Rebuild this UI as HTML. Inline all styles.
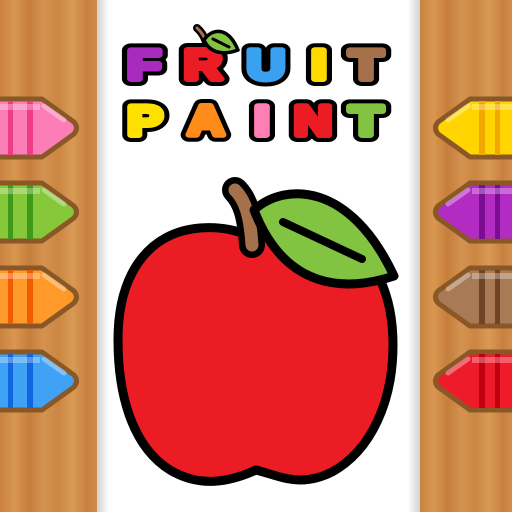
<!DOCTYPE html>
<html><head><style>
html,body{margin:0;padding:0;width:512px;height:512px;overflow:hidden;background:#fff}
</style></head><body>
<svg width="512" height="512" viewBox="0 0 512 512" xmlns="http://www.w3.org/2000/svg">
<defs>
<linearGradient id="wood" x1="0" x2="1" y1="0" y2="0">
<stop offset="0" stop-color="#c98240"/><stop offset="0.15" stop-color="#d8974f"/><stop offset="0.3" stop-color="#c67e3c"/><stop offset="0.45" stop-color="#d49250"/><stop offset="0.6" stop-color="#cb8642"/><stop offset="0.75" stop-color="#d99a55"/><stop offset="0.9" stop-color="#c88040"/><stop offset="1" stop-color="#d08c4a"/>
</linearGradient>
<linearGradient id="shL" x1="0" x2="1"><stop offset="0" stop-color="#000" stop-opacity="0.18"/><stop offset="1" stop-color="#000" stop-opacity="0"/></linearGradient>
<linearGradient id="shR" x1="1" x2="0"><stop offset="0" stop-color="#000" stop-opacity="0.18"/><stop offset="1" stop-color="#000" stop-opacity="0"/></linearGradient>
<style>
.o{font-family:"Liberation Sans",sans-serif;font-weight:bold;font-size:42px;text-anchor:middle;stroke:#000;stroke-width:14px;stroke-linejoin:round;fill:#000}
.c{font-family:"Liberation Sans",sans-serif;font-weight:bold;font-size:42px;text-anchor:middle;stroke-width:6px;stroke-linejoin:round}
</style>
</defs>
<rect x="0" y="0" width="97" height="512" fill="url(#wood)"/>
<rect x="420" y="0" width="92" height="512" fill="url(#wood)"/>
<rect x="97" y="0" width="12" height="512" fill="url(#shL)"/>
<rect x="408" y="0" width="12" height="512" fill="url(#shR)"/>

<g transform="translate(0,128)"><path d="M-10,-29 L42,-29 L74,-6 Q79,0 74,6 L42,29 L-10,29 Z" fill="#fb7fb6" stroke="#8a5726" stroke-width="5" stroke-linejoin="round"/><rect x="8" y="-27" width="5" height="54" fill="#ee3d84"/><rect x="27" y="-27" width="6" height="54" fill="#ee3d84"/><rect x="-5" y="-24" width="45" height="6" fill="#fff" opacity="0.3"/><path d="M44,-22 L64,-8" stroke="#fff" stroke-opacity="0.35" stroke-width="5" stroke-linecap="round"/></g>
<g transform="translate(0,212)"><path d="M-10,-29 L42,-29 L74,-6 Q79,0 74,6 L42,29 L-10,29 Z" fill="#86c83a" stroke="#8a5726" stroke-width="5" stroke-linejoin="round"/><rect x="8" y="-27" width="5" height="54" fill="#3f9a1a"/><rect x="27" y="-27" width="6" height="54" fill="#3f9a1a"/><rect x="-5" y="-24" width="45" height="6" fill="#fff" opacity="0.3"/><path d="M44,-22 L64,-8" stroke="#fff" stroke-opacity="0.35" stroke-width="5" stroke-linecap="round"/></g>
<g transform="translate(0,297)"><path d="M-10,-29 L42,-29 L74,-6 Q79,0 74,6 L42,29 L-10,29 Z" fill="#ff9a2a" stroke="#8a5726" stroke-width="5" stroke-linejoin="round"/><rect x="8" y="-27" width="5" height="54" fill="#f25a00"/><rect x="27" y="-27" width="6" height="54" fill="#f25a00"/><rect x="-5" y="-24" width="45" height="6" fill="#fff" opacity="0.3"/><path d="M44,-22 L64,-8" stroke="#fff" stroke-opacity="0.35" stroke-width="5" stroke-linecap="round"/></g>
<g transform="translate(0,381)"><path d="M-10,-29 L42,-29 L74,-6 Q79,0 74,6 L42,29 L-10,29 Z" fill="#3fa2f4" stroke="#8a5726" stroke-width="5" stroke-linejoin="round"/><rect x="8" y="-27" width="5" height="54" fill="#1265e0"/><rect x="27" y="-27" width="6" height="54" fill="#1265e0"/><rect x="-5" y="-24" width="45" height="6" fill="#fff" opacity="0.3"/><path d="M44,-22 L64,-8" stroke="#fff" stroke-opacity="0.35" stroke-width="5" stroke-linecap="round"/></g>

<g transform="translate(512,128) scale(-1,1)"><path d="M-10,-29 L42,-29 L74,-6 Q79,0 74,6 L42,29 L-10,29 Z" fill="#ffd400" stroke="#8a5726" stroke-width="5" stroke-linejoin="round"/><rect x="12" y="-27" width="5" height="54" fill="#f2a800"/><rect x="27" y="-27" width="6" height="54" fill="#f2a800"/><rect x="-5" y="-24" width="45" height="6" fill="#fff" opacity="0.3"/><path d="M44,-22 L64,-8" stroke="#fff" stroke-opacity="0.35" stroke-width="5" stroke-linecap="round"/></g>
<g transform="translate(512,212) scale(-1,1)"><path d="M-10,-29 L42,-29 L74,-6 Q79,0 74,6 L42,29 L-10,29 Z" fill="#b22cc4" stroke="#8a5726" stroke-width="5" stroke-linejoin="round"/><rect x="12" y="-27" width="5" height="54" fill="#7a0d92"/><rect x="27" y="-27" width="6" height="54" fill="#7a0d92"/><rect x="-5" y="-24" width="45" height="6" fill="#fff" opacity="0.3"/><path d="M44,-22 L64,-8" stroke="#fff" stroke-opacity="0.35" stroke-width="5" stroke-linecap="round"/></g>
<g transform="translate(512,297) scale(-1,1)"><path d="M-10,-29 L42,-29 L74,-6 Q79,0 74,6 L42,29 L-10,29 Z" fill="#a87a56" stroke="#8a5726" stroke-width="5" stroke-linejoin="round"/><rect x="12" y="-27" width="5" height="54" fill="#6e4424"/><rect x="27" y="-27" width="6" height="54" fill="#6e4424"/><rect x="-5" y="-24" width="45" height="6" fill="#fff" opacity="0.3"/><path d="M44,-22 L64,-8" stroke="#fff" stroke-opacity="0.35" stroke-width="5" stroke-linecap="round"/></g>
<g transform="translate(512,381) scale(-1,1)"><path d="M-10,-29 L42,-29 L74,-6 Q79,0 74,6 L42,29 L-10,29 Z" fill="#ee1c2b" stroke="#8a5726" stroke-width="5" stroke-linejoin="round"/><rect x="12" y="-27" width="5" height="54" fill="#c00010"/><rect x="27" y="-27" width="6" height="54" fill="#c00010"/><rect x="-5" y="-24" width="45" height="6" fill="#fff" opacity="0.3"/><path d="M44,-22 L64,-8" stroke="#fff" stroke-opacity="0.35" stroke-width="5" stroke-linecap="round"/></g>

<!-- title -->
<g transform="translate(144,79) scale(1.3,1)"><text class="o">F</text><text class="c" fill="#a82bbd" stroke="#a82bbd">F</text></g>
<g transform="translate(203,79) scale(1.25,1)"><text class="o">R</text><text class="c" fill="#ec1c24" stroke="#ec1c24">R</text></g>
<g transform="translate(266,79) scale(1.25,1)"><text class="o">U</text><text class="c" fill="#3aa0f0" stroke="#3aa0f0">U</text></g>
<g transform="translate(319,79) scale(1.3,1)"><text class="o">I</text><text class="c" fill="#ffd900" stroke="#ffd900">I</text></g>
<g transform="translate(366,79) scale(1.3,1)"><text class="o">T</text><text class="c" fill="#a4714b" stroke="#a4714b">T</text></g>
<g transform="translate(145,135) scale(1.25,1)"><text class="o">P</text><text class="c" fill="#ffe100" stroke="#ffe100">P</text></g>
<g transform="translate(206,135) scale(1.2,1)"><text class="o">A</text><text class="c" fill="#ff8c1a" stroke="#ff8c1a">A</text></g>
<g transform="translate(262,135) scale(1.3,1)"><text class="o">I</text><text class="c" fill="#ff7eb5" stroke="#ff7eb5">I</text></g>
<g transform="translate(313,135) scale(1.25,1)"><text class="o">N</text><text class="c" fill="#ec1c24" stroke="#ec1c24">N</text></g>
<g transform="translate(366,135) scale(1.3,1)"><text class="o">T</text><text class="c" fill="#82c341" stroke="#82c341">T</text></g>

<path d="M197,28 Q203,33 206,42" stroke="#000" stroke-width="8" fill="none" stroke-linecap="round"/>
<path d="M197,28 Q203,33 206,42" stroke="#a4714b" stroke-width="3" fill="none" stroke-linecap="round"/>
<path d="M204,40 C212,28 228,26 238,50 C225,55 210,54 204,40 Z" fill="#82c341" stroke="#000" stroke-width="3.5" stroke-linejoin="round"/>
<path d="M213,39 L229,47" stroke="#000" stroke-width="3" stroke-linecap="round"/>

<path d="M256,470 C230,482 200,488 170,470 C130,445 118,390 118,340 C118,272 150,232 200,228 C225,226 240,232 256,238 C275,230 305,224 335,236 C378,252 393,300 393,345 C393,400 372,450 332,472 C300,488 280,476 256,470 Z" fill="#ec1c24" stroke="#000" stroke-width="9" stroke-linejoin="round"/>
<path d="M235,190 C245,200 250,215 252,245" stroke="#000" stroke-width="26" fill="none" stroke-linecap="round"/>
<path d="M235,190 C245,200 250,215 252,245" stroke="#a4714b" stroke-width="13" fill="none" stroke-linecap="round"/>
<path d="M254,210 C285,182 350,182 394,276 C345,292 285,290 254,210 Z" fill="#82c341" stroke="#000" stroke-width="9" stroke-linejoin="round"/>
<path d="M283,222 L362,259" stroke="#000" stroke-width="8" stroke-linecap="round"/>
</svg>
</body></html>
